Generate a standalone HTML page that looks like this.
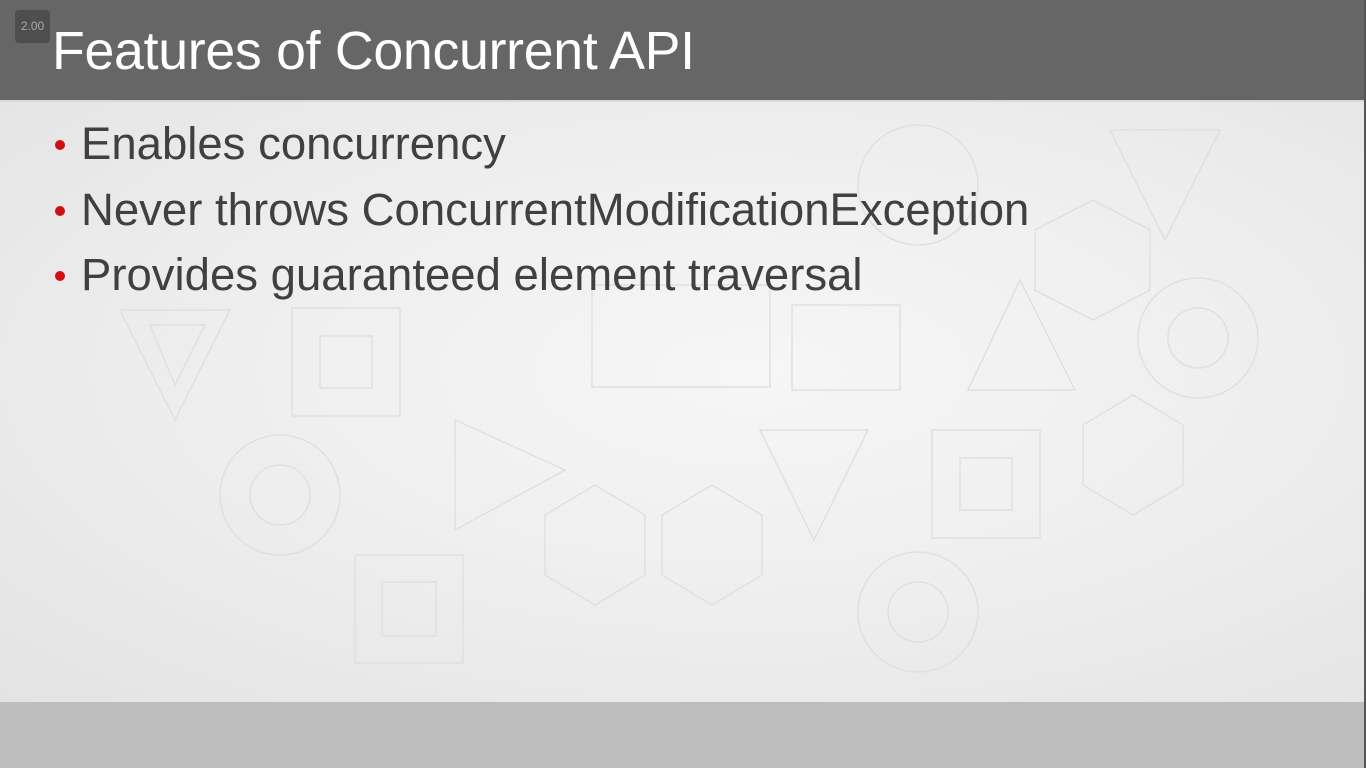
<!DOCTYPE html>
<html><head><meta charset="utf-8"><style>
html,body{margin:0;padding:0;width:1366px;height:768px;overflow:hidden;font-family:"Liberation Sans",Arial,sans-serif}
.hdr{position:absolute;left:0;top:0;width:1366px;height:100px;background:#666666}
.hdr h1{position:absolute;left:52px;top:20px;margin:0;font-weight:normal;font-size:53.7px;color:#fff;white-space:nowrap;letter-spacing:-0.3px}
.badge{position:absolute;left:15px;top:10px;width:35px;height:33px;background:#4e4e4e;border-radius:4px;color:#aaa;font-size:12px;line-height:33px;text-align:center}
.body{position:absolute;left:0;top:100px;width:1366px;height:602px;background:radial-gradient(ellipse at 55% 45%,#f6f6f6 0%,#eeeeee 50%,#e3e3e3 100%);border-top:2px solid #d8d8d8;box-sizing:border-box}
.foot{position:absolute;left:0;top:702px;width:1366px;height:66px;background:#bdbdbd}
.edge{position:absolute;right:0;top:0;width:2px;height:768px;background:#555}
ul{position:absolute;left:0;top:0;margin:0;padding:0;list-style:none}
li{position:absolute;left:81px;font-size:45.5px;color:#404040;white-space:nowrap}
li:before{content:"";position:absolute;left:-26px;top:22px;width:10px;height:10px;border-radius:50%;background:#d01010}
svg{position:absolute;left:0;top:100px}
</style></head><body>
<div class="body"></div>
<svg width="1366" height="602" fill="none" stroke="#e0e0e0" stroke-width="1.5">
<polygon points="120,210 230,210 175,320"/><polygon points="150,225 205,225 175,285"/>
<rect x="292" y="208" width="108" height="108"/><rect x="320" y="236" width="52" height="52"/>
<polygon points="455,320 565,370 455,430"/>
<circle cx="280" cy="395" r="60"/><circle cx="280" cy="395" r="30"/>
<polygon points="595,385 645,415 645,475 595,505 545,475 545,415"/>
<polygon points="712,385 762,415 762,475 712,505 662,475 662,415"/>
<rect x="355" y="455" width="108" height="108"/><rect x="382" y="482" width="54" height="54"/>
<polygon points="760,330 868,330 814,440"/>
<rect x="932" y="330" width="108" height="108"/><rect x="960" y="358" width="52" height="52"/>
<polygon points="1133,295 1183,325 1183,385 1133,415 1083,385 1083,325"/>
<circle cx="918" cy="512" r="60"/><circle cx="918" cy="512" r="30"/>
<polygon points="968,290 1075,290 1020,180"/>
<circle cx="1198" cy="238" r="60"/><circle cx="1198" cy="238" r="30"/>
<rect x="592" y="185" width="178" height="102"/>
<rect x="792" y="205" width="108" height="85"/>
<polygon points="1093,100 1150,130 1150,190 1093,220 1035,190 1035,130"/>
<polygon points="1110,30 1220,30 1165,140"/>
<circle cx="918" cy="85" r="60"/>
</svg>
<div class="hdr"><h1>Features of Concurrent API</h1><div class="badge">2.00</div></div>
<ul>
<li style="top:118px">Enables concurrency</li>
<li style="top:184px">Never throws ConcurrentModificationException</li>
<li style="top:249px">Provides guaranteed element traversal</li>
</ul>
<div class="foot"></div>
<div class="edge"></div>
</body></html>
